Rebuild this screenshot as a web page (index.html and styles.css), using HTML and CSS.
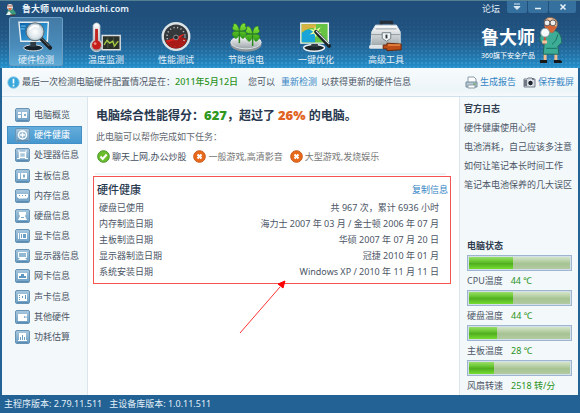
FILE: index.html
```html
<!DOCTYPE html>
<html lang="zh-CN">
<head>
<meta charset="utf-8">
<title>鲁大师</title>
<link rel="stylesheet" href="styles.css">
</head>
<body>
<svg class="defs" aria-hidden="true">
  <defs>
    <linearGradient id="silver" x1="0" y1="0" x2="0" y2="1"><stop offset="0" stop-color="#fff"/><stop offset="1" stop-color="#9aa3a8"/></linearGradient>
    <linearGradient id="screen" x1="0" y1="0" x2="1" y2="1"><stop offset="0" stop-color="#0c5fa8"/><stop offset="1" stop-color="#43b4ea"/></linearGradient>
    <linearGradient id="tile" x1="0" y1="0" x2="0" y2="1"><stop offset="0" stop-color="#a9c8de"/><stop offset="1" stop-color="#6d9fc4"/></linearGradient>
    <radialGradient id="glass"><stop offset="0" stop-color="#fff"/><stop offset=".7" stop-color="#dbe5ea"/><stop offset="1" stop-color="#a9bac4"/></radialGradient>
    <linearGradient id="leaf" x1="0" y1="0" x2="0" y2="1"><stop offset="0" stop-color="#8be83a"/><stop offset="1" stop-color="#2e9a16"/></linearGradient>
    <g id="clover"><path d="M0 2v11" stroke="#2a8a18" stroke-width="1.6"/><path d="M0 0C-7 1-9-3-6-5-8-8-2-10 0 0ZM0 0C1-10 8-9 6-5 9-3 7 1 0 0ZM0 1C-8-1-9 4-6 6-4 10-1 8 0 1ZM0 1C8-1 9 4 6 6 4 10 1 8 0 1Z" fill="url(#leaf)" stroke="#238012" stroke-width=".6"/></g>
    <g id="tilebox"><rect x=".5" y=".5" width="14" height="13" rx="1.5" fill="url(#tile)" stroke="#6793b5"/><path d="M2 12.5h11" stroke="#5a8cb3"/></g>
  </defs>
</svg>
<div class="window">
  <header class="header">
    <div class="titlebar">
      <svg class="appicon" viewBox="0 0 12 13"><path d="M1 12 3 7l5-1 3 4-1 2Z" fill="#3f9b80"/><circle cx="5" cy="4" r="3" fill="#e8e0dc"/><path d="M3 5h4L5 8Z" fill="#d96b3c"/><path d="M2 3h6" stroke="#a45b4b"/><path d="m1 12 3-4 3 4Z" fill="#e9f2ee"/><path d="M5 12h5" stroke="#5b2d20"/></svg>
      <h1>鲁大师 www.ludashi.com</h1>
      <a class="forum" href="#">论坛</a>
      <div class="winbuttons">
        <button aria-label="菜单"><svg viewBox="0 0 10 8"><path d="M2 1h6M2 3.500h6L5 6.500Z" fill="#dceaf5" stroke="#dceaf5"/></svg></button>
        <button aria-label="最小化"><svg viewBox="0 0 10 8"><path d="M2 5.500h6" stroke="#e8f2fa" stroke-width="1.500"/></svg></button>
        <button class="close" aria-label="关闭"><svg viewBox="0 0 10 8"><path d="m2.500 1.500 5 5m0-5-5 5" stroke="#e8f2fa" stroke-width="1.500"/></svg></button>
      </div>
    </div>
    <div class="toolrow">
      <nav class="tools">
        <a class="tool active" href="#"><svg viewBox="0 0 38 34"><ellipse cx="16" cy="29" rx="10" ry="3.200" fill="#15222c" stroke="#dde5e9"/><path d="M13 22h6v6h-6Z" fill="#303c45"/><path d="M1 2h31l-1 20H3Z" fill="url(#screen)" stroke="#e9eef1" stroke-width="1.500"/><path d="M3 6h5M3 9h4" stroke="#7ad3f6"/><path d="m24 19 10 10" stroke="#1b2024" stroke-width="4" stroke-linecap="round"/><path d="m25 19 8 8" stroke="#788087"/><circle cx="18" cy="12" r="9.500" fill="url(#glass)" stroke="#5a666e"/><path d="M12 10q4-6 10-3" stroke="#fff" stroke-width="2" fill="none"/></svg><span>硬件检测</span></a>
        <a class="tool" href="#"><svg viewBox="0 0 38 34"><path d="M15 16h19v15H15Z" fill="#2b3128" stroke="#d9dfe1" stroke-width="1.500"/><path d="M17 23h15M21 18v11M27 18v11" stroke="#63724c" stroke-width=".7"/><path d="m17 26 3-5 3 3 3-2 2 5 4-5" fill="none" stroke="#a8d242" stroke-width="1.300"/><path d="M5.500 5Q9 .500 12.500 5v16a6.500 6.500 0 1 1-7 0Z" fill="url(#silver)" stroke="#cfd6da"/><path d="M9 9v17" stroke="#c1221d" stroke-width="3"/><circle cx="9" cy="26" r="4.800" fill="#c51e1a"/><circle cx="7.500" cy="24.500" r="1.500" fill="#ed8c82"/></svg><span>温度监测</span></a>
        <a class="tool" href="#"><svg viewBox="0 0 38 34"><circle cx="19" cy="17" r="14" fill="#35383b" stroke="#dce3e6" stroke-width="2.500"/><path d="M7.500 21A12 12 0 0 0 30.500 21Q25 15 19 19 13 22 7.500 21Z" fill="#a91b18"/><circle cx="19" cy="17" r="9.500" fill="none" stroke="#b9c1c5" stroke-width="1.600" stroke-dasharray="1.200 2.600"/><path d="M9.500 22A11 11 0 0 0 28.500 22Z" fill="#a91b18"/><path d="m9 22 18-7-7 5Z" fill="#e8231b" stroke="#e8231b"/><circle cx="19" cy="18" r="2.500" fill="#25282a" stroke="#8d979c"/></svg><span>性能测试</span></a>
        <a class="tool" href="#"><svg viewBox="0 0 38 34"><ellipse cx="19" cy="25" rx="16.500" ry="8" fill="#8d969b"/><ellipse cx="19" cy="23" rx="16" ry="7" fill="url(#silver)" stroke="#dde4e7"/><use href="#clover" x="12" y="11"/><use href="#clover" x="26" y="14"/></svg><span>节能省电</span></a>
        <a class="tool" href="#"><svg viewBox="0 0 38 34"><ellipse cx="17" cy="29" rx="11" ry="3.500" fill="#1c252b" stroke="#e8eef1" stroke-width="1.500"/><path d="M14 22h7v6h-7Z" fill="#343e45"/><path d="M3 3h29v21H3Z" fill="#67c343" stroke="#edf2f4" stroke-width="1.500"/><path d="M4 13q8-7 14 0v10H4Z" fill="#1aa4d8"/><path d="M4 4h15v5q-7-3-15 4Z" fill="#d8b343"/><path d="m18 6 1 4 5-3-3 5 4 1-5 1-1 4-2-4-5 1 4-3-4-3 5 1Z" fill="#e7ff9f"/><path d="m19 12 14 15" stroke="#1b2429" stroke-width="4" stroke-linecap="round"/><path d="m19 11 14 14" stroke="#e1e6e8" stroke-width="1.300"/></svg><span>一键优化</span></a>
        <a class="tool" href="#"><svg viewBox="0 0 38 34"><path d="M14 7V2h11v5" fill="none" stroke="#273039" stroke-width="3"/><path d="m4 12 4-7h22l4 7v16H3Z" fill="url(#silver)" stroke="#dce2e5"/><path d="M3 15h31M8 9h22" stroke="#8f999f"/><path d="M15 13h9v6l-4.500 3-4.500-3Z" fill="#f2f5f6" stroke="#6e7a81"/><path d="M19.500 15v4" stroke="#2c353a" stroke-width="2"/><path d="M3 28h14" stroke="#dfe4e6" stroke-width="4" stroke-linecap="round"/><path d="M16 26h4v-2l15 1v6l-15 1v-2h-4Z" fill="#bd4d16" stroke="#682707"/><path d="M21 26h13" stroke="#f39852" stroke-width="1.300"/></svg><span>高级工具</span></a>
      </nav>
      <div class="brand">
        <div class="brandtext"><strong>鲁大师</strong><span>360旗下安全产品</span></div>
        <svg class="mascot" viewBox="0 0 26 48"><path d="M7 36v8m11-8v8" stroke="#f0bd8e" stroke-width="3"/><path d="M2 44h7v3H2q-1-2 0-3Zm14 0h6q3 1 2 3h-8Z" fill="#15191b"/><path d="M7 15 18 14q6 3 6 12l-4 4 1 8H5l1-10-4-3q-2-8 5-10Z" fill="#3cac96" stroke="#20665c"/><path d="M20 18q-1 7-6 10m-6 4h11" fill="none" stroke="#19705f"/><path d="M6 4Q9-1 15 1q6 2 4 9l-4 6-7-4Z" fill="#f4c39c" stroke="#806252"/><path d="M6 9q5-3 10 0l3 1-5 6-5-1Z" fill="#d66434"/><circle cx="9" cy="6" r="3" fill="#eee" stroke="#5b5556"/><circle cx="15" cy="6" r="3" fill="#eee" stroke="#5b5556"/><path d="m7 20-1 8" stroke="#c1523b" stroke-width="2"/><circle cx="7" cy="16" r="4.500" fill="#f5fafb" stroke="#87999f"/><path d="M4 24h5v3H4Z" fill="#f5c59e"/></svg>
      </div>
    </div>
  </header>

  <div class="notice">
    <svg class="info" viewBox="0 0 14 14"><circle cx="7" cy="7" r="6.300" fill="#38a7dc" stroke="#a2d3ec"/><path d="M7 3v5m0 1.500v1.800" stroke="#fff" stroke-width="1.800"/></svg>
    <p><span>最后一次检测电脑硬件配置情况是在：<b>2011年5月12日</b></span><span>您可以</span><a href="#">重新检测</a><span class="tail">以获得更新的硬件信息</span></p>
    <div class="actions">
      <a href="#"><svg viewBox="0 0 13 13"><path d="M3 6V1h6l2 2v3" fill="#fff" stroke="#8b9ba8"/><path d="M1 6h11v5H1Z" fill="#b7c8d3" stroke="#748c9d"/><path d="M3 9h7v3H3Z" fill="#fff" stroke="#8b9ba8"/><path d="M8 8h3" stroke="#5ea34e"/></svg>生成报告</a>
      <a href="#"><svg viewBox="0 0 13 13"><path d="M1 3h3l1-1h4l1 1h2v8H1Z" fill="#d1d8df" stroke="#777f8b"/><path d="M1 4h3v6H1Z" fill="#727987"/><circle cx="7.500" cy="7" r="2.800" fill="#1d2531" stroke="#f5f7fa"/><path d="M9 3h2" stroke="#454b56"/></svg>保存截屏</a>
    </div>
  </div>

  <div class="content">
    <nav class="sidebar">
      <ul>
        <li><a href="#"><svg viewBox="0 0 15 14"><use href="#tilebox"/><path d="M3 4h3v2H3Zm0 3h3v3H3Zm4-3h5v6H7Z" fill="#f7fbfd"/><path d="M9 6h2v2H9Z" fill="#83aecb"/></svg>电脑概览</a></li>
        <li><a class="current" href="#"><svg viewBox="0 0 15 14"><use href="#tilebox"/><circle cx="7.500" cy="7" r="4" fill="none" stroke="#fff" stroke-width="1.500"/><path d="M7.500 4.500v5M5 7h5" stroke="#fff" stroke-width="1.500"/></svg>硬件健康</a></li>
        <li><a href="#"><svg viewBox="0 0 15 14"><use href="#tilebox"/><path d="M4.500 4.500h6v5h-6Z" fill="#a9c9de" stroke="#fff" stroke-width="1.500"/><path d="M3 3h2m5 0h2M2 10.500h3m5 0h3" stroke="#fff"/></svg>处理器信息</a></li>
        <li><a href="#"><svg viewBox="0 0 15 14"><use href="#tilebox"/><path d="M3 4h2v6H3Zm3 0h6v6H6Z" fill="#fff"/><path d="M8 5.500h2v3H8Z" fill="#83aecb"/></svg>主板信息</a></li>
        <li><a href="#"><svg viewBox="0 0 15 14"><use href="#tilebox"/><path d="M2 5h11v3l-2 2-1-1-1 1-1-1-1 1-1-1-1 1-3-2Z" fill="#fff"/><path d="M4 6h1v1H4Zm3 0h1v1H7Zm3 0h1v1h-1Z" fill="#6c9fc4"/></svg>内存信息</a></li>
        <li><a href="#"><svg viewBox="0 0 15 14"><use href="#tilebox"/><path d="M4 3h7v2l-1 2 2 4H3l2-4-1-2Z" fill="#fff"/><path d="M6 8h3v1H6Z" fill="#79a8c9"/></svg>硬盘信息</a></li>
        <li><a href="#"><svg viewBox="0 0 15 14"><use href="#tilebox"/><path d="M3 4h1v6H3Zm2 0h7v6H5Z" fill="#fff"/><path d="M6 5h1v4H6Zm2 0h3v4H8Z" fill="#6c9fc4"/></svg>显卡信息</a></li>
        <li><a href="#"><svg viewBox="0 0 15 14"><use href="#tilebox"/><path d="M3.500 3.500h8v5h-8Z" fill="#92b9d4" stroke="#fff"/><path d="M5 9h5l2 2H3Z" fill="#fff"/></svg>显示器信息</a></li>
        <li><a href="#"><svg viewBox="0 0 15 14"><use href="#tilebox"/><path d="M3 4h9v6H3Z" fill="#fff"/><path d="M4 9V7h2V5h3v2h2v2Z" fill="#5f96be"/></svg>网卡信息</a></li>
        <li><a href="#"><svg viewBox="0 0 15 14"><use href="#tilebox"/><path d="M3 4h9v7H3Z" fill="#fff"/><path d="M4 5h1v1H4Zm0 2h1v1H4Zm0 2h1v1H4Zm3-3h1v2H7Zm3-1h1v4h-1Z" fill="#5f96be"/></svg>声卡信息</a></li>
        <li><a href="#"><svg viewBox="0 0 15 14"><use href="#tilebox"/><path d="M3 4h9v2H9v2h3v3H3Z" fill="#fff"/><path d="M10 7h2" stroke="#fff"/></svg>其他硬件</a></li>
        <li><a href="#"><svg viewBox="0 0 15 14"><use href="#tilebox"/><path d="M4 3h7v7h1v1H3v-1h1Z" fill="#fff"/><path d="M5 7h1v3H5Zm2-2h1v5H7Zm2 2h1v3H9Z" fill="#6c9fc4"/></svg>功耗估算</a></li>
      </ul>
    </nav>

    <main class="main">
      <h2>电脑综合性能得分：<b class="score">627</b>，超过了 <b class="percent">26%</b> 的电脑。</h2>
      <p class="lead">此电脑可以帮你完成如下任务：</p>
      <ul class="tasks">
        <li class="yes"><svg viewBox="0 0 13 13"><circle cx="6.500" cy="6.500" r="5.800" fill="#6abd2c" stroke="#469224"/><path d="m3.500 6.500 2.200 2.500 4-4.500" fill="none" stroke="#fff" stroke-width="2"/></svg>聊天上网,办公炒股</li>
        <li><svg viewBox="0 0 13 13"><circle cx="6.500" cy="6.500" r="5.800" fill="#e9691b" stroke="#c85617"/><path d="m4.500 4.500 4 4m0-4-4 4" stroke="#fff" stroke-width="2"/></svg>一般游戏,高清影音</li>
        <li><svg viewBox="0 0 13 13"><circle cx="6.500" cy="6.500" r="5.800" fill="#e9691b" stroke="#c85617"/><path d="m4.500 4.500 4 4m0-4-4 4" stroke="#fff" stroke-width="2"/></svg>大型游戏,发烧娱乐</li>
      </ul>
      <section class="health">
        <div class="healthhead"><h3>硬件健康</h3><a href="#">复制信息</a></div>
        <table>
          <tr><th scope="row">硬盘已使用</th><td>共 967 次，累计 6936 小时</td></tr>
          <tr><th scope="row">内存制造日期</th><td>海力士 2007 年 03 月 / 金士顿 2006 年 07 月</td></tr>
          <tr><th scope="row">主板制造日期</th><td>华硕 2007 年 07 月 20 日</td></tr>
          <tr><th scope="row">显示器制造日期</th><td>冠捷 2010 年 01 月</td></tr>
          <tr><th scope="row">系统安装日期</th><td>Windows XP / 2010 年 11 月 11 日</td></tr>
        </table>
        <svg class="arrow" viewBox="0 0 48 56"><path d="M1 54 41 8" stroke="#f33" fill="none"/><path d="m46 2-2 7-5-4Z" fill="#f00" stroke="#f00"/></svg>
      </section>
    </main>

    <aside class="side">
      <section class="log">
        <h3>官方日志</h3>
        <ul>
          <li><a href="#">硬件健康使用心得</a></li>
          <li><a href="#">电池消耗，自己应该多注意</a></li>
          <li><a href="#">如何让笔记本长时间工作</a></li>
          <li><a href="#">笔记本电池保养的几大误区</a></li>
        </ul>
      </section>
      <section class="status">
        <h3>电脑状态</h3>
        <div class="gauge"><div class="bar"><div class="fill" style="width:44%"></div></div><p>CPU温度<b>44 ℃</b></p></div>
        <div class="gauge"><div class="bar"><div class="fill" style="width:44%"></div></div><p>硬盘温度<b>44 ℃</b></p></div>
        <div class="gauge"><div class="bar"><div class="fill" style="width:28%"></div></div><p>主板温度<b>28 ℃</b></p></div>
        <div class="gauge"><div class="bar"><div class="fill" style="width:25%"></div></div><p>风扇转速<b>2518 转/分</b></p></div>
      </section>
    </aside>
  </div>

  <footer class="footer"><span>主程序版本: 2.79.11.511</span><span>主设备库版本: 1.0.11.511</span></footer>
</div>
</body>
</html>
```
FILE: styles.css
```css
* { box-sizing: border-box; }
body, h1, h2, h3, p, ul { margin: 0; padding: 0; }
ul { list-style: none; }
a { color: inherit; text-decoration: none; }
svg { display: block; flex: none; }
.defs { position: absolute; width: 0; height: 0; }

body {
  font: 9px/14px "Noto Sans", "Noto Sans CJK SC", sans-serif;
  color: #4c5666;
  white-space: nowrap;
}
.window {
  display: flex;
  flex-direction: column;
  min-height: 100vh;
  padding: 0 2px;
  border-top: 1px solid #527f91;
  background: #226294;
  overflow: hidden;
}

.header {
  height: 67px;
  margin: 0 -2px;
  padding: 0 4px 0 5px;
  color: #e3f0f9;
  background:
    linear-gradient(#204f7b 20%, rgba(32, 79, 123, 0)),
    radial-gradient(circle, rgba(120, 190, 230, .25) 1px, transparent 1px) 0 0 / 4px 4px,
    linear-gradient(#204f7b, #235f92 45%, #2391cd);
}
.titlebar { display: flex; align-items: center; height: 16px; }
.appicon { width: 12px; height: 13px; margin-right: 5px; }
h1 { flex: 1; font-size: 9px; font-weight: 600; color: #eaf4fb; }
.forum { margin-right: 7px; }
.winbuttons { display: flex; align-self: flex-start; gap: 1px; }
.winbuttons button {
  display: grid;
  place-items: center;
  width: 20px;
  height: 12px;
  padding: 0;
  border: 0;
  border-radius: 0 0 2px 2px;
  background: #35709f;
}
.winbuttons .close { width: 27px; }
.winbuttons svg { width: 10px; height: 8px; }

.toolrow { display: flex; justify-content: space-between; }
.tools { display: flex; gap: 16px; padding-left: 4px; }
.tool {
  display: flex;
  flex-direction: column;
  align-items: center;
  width: 54px;
  height: 49px;
  padding-top: 2px;
  border: 1px solid transparent;
  border-radius: 2px;
}
.tool.active { border-color: #6c9fc5; background: linear-gradient(#447aa5, #4a8cbb 60%, #5fabd6); }
.tool svg { width: 36px; height: 33px; }
.brand { display: flex; gap: 3px; padding-right: 12px; }
.brandtext { display: flex; flex-direction: column; color: #fff; padding-top: 6px; }
.brandtext strong { font: 700 18px/26px "Noto Sans CJK SC", sans-serif; }
.brandtext span { font-size: 7px; line-height: 14px; }
.mascot { width: 26px; height: 47px; }

.notice {
  display: flex;
  align-items: center;
  height: 29px;
  padding: 0 4px 0 5px;
  border-bottom: 1px solid #cfe1ec;
  background: linear-gradient(#f8fbfd, #edf5f8 80%, #f7fafc);
}
.info { width: 13px; height: 13px; margin-right: 2px; }
.notice p { display: flex; flex: 1; }
.notice p a { margin: 0 4px 0 6px; }
.notice p span + span { margin-left: 10px; }
.notice p .tail { margin-left: 0; }
.notice a { color: #3585c4; }
.notice b { font-weight: 500; color: #2a9321; }
.actions { display: flex; gap: 7px; }
.actions a { display: flex; align-items: center; gap: 2px; }
.actions svg { width: 13px; height: 13px; }

.content { display: flex; flex: 1; background: #fff; }
.sidebar, .side { background: #f3f8fb; }
.sidebar { flex: 0 0 86px; display: flex; border-right: 1px solid #dce6ec; }
.sidebar ul { flex: 1; display: flex; flex-direction: column; padding: 8px 5px 48px; }
.sidebar li { flex: 1; display: grid; align-items: center; }
.sidebar a { display: flex; align-items: center; gap: 4px; height: 18px; padding-left: 7px; border: 1px solid transparent; }
.sidebar .current { color: #fff; border-color: #4290c5; background: linear-gradient(#65addb, #4698cf); }
.sidebar svg { width: 15px; height: 14px; }

.main { flex: 1; padding: 8px 8px 0 5px; }
h2 { padding-left: 3px; font-size: 12px; line-height: 22px; font-weight: 600; color: #28384f; }
h2 b { font-size: 13px; line-height: 20px; }
.score { color: #30981f; }
.percent { color: #e06323; }
.lead { padding: 2px 3px 0; line-height: 16px; color: #626870; }
.tasks { display: flex; gap: 7px; margin: 0 5px 0 2px; padding: 4px 0 9px 2px; border-bottom: 2px solid #edf4f7; color: #777; }
.tasks li { display: flex; align-items: center; gap: 2px; line-height: 15px; }
.tasks .yes { color: #46505f; }
.tasks svg { width: 13px; height: 13px; }
.health { position: relative; margin-top: 1px; padding: 3px 2px; border: 1px solid #f65353; }
.healthhead { display: flex; justify-content: space-between; align-items: center; height: 20px; padding-left: 1px; }
.healthhead h3 { font-size: 11px; font-weight: 500; color: #29394f; }
.healthhead a { color: #3585c4; }
table { width: 100%; border-collapse: collapse; }
th, td { height: 16px; padding: 0 3px; font-weight: 400; line-height: 16px; }
th { text-align: left; }
td { padding-right: 9px; text-align: right; }
.arrow { position: absolute; right: 163px; bottom: -52px; width: 48px; height: 56px; }

.side { flex: 0 0 119px; display: flex; flex-direction: column; justify-content: space-between; border-left: 1px solid #dce6ec; }
.side h3 { font-size: 9px; font-weight: 600; color: #303d50; }
.log { padding: 2px 4px; }
.log h3, .log li { line-height: 19px; }
.status { padding: 0 6px 0 7px; }
.status h3 { line-height: 19px; }
.gauge { height: 35px; }
.bar { height: 16px; padding: 1px; border: 1px solid #9db5cf; box-shadow: inset 0 0 0 1px #d3e0e9; background: linear-gradient(#dae9d0, #bad1a9 35%, #a6c392 55%, #b5cca6); }
.fill { height: 12px; background: linear-gradient(#9ade69, #6ac834 35%, #51ae20 55%, #76dd32); }
.gauge p { line-height: 19px; }
.gauge b { margin-left: 8px; font-weight: 400; color: #2a9321; }

.footer { display: flex; gap: 7px; height: 18px; padding-left: 2px; line-height: 17px; color: #e2eff8; }
```
